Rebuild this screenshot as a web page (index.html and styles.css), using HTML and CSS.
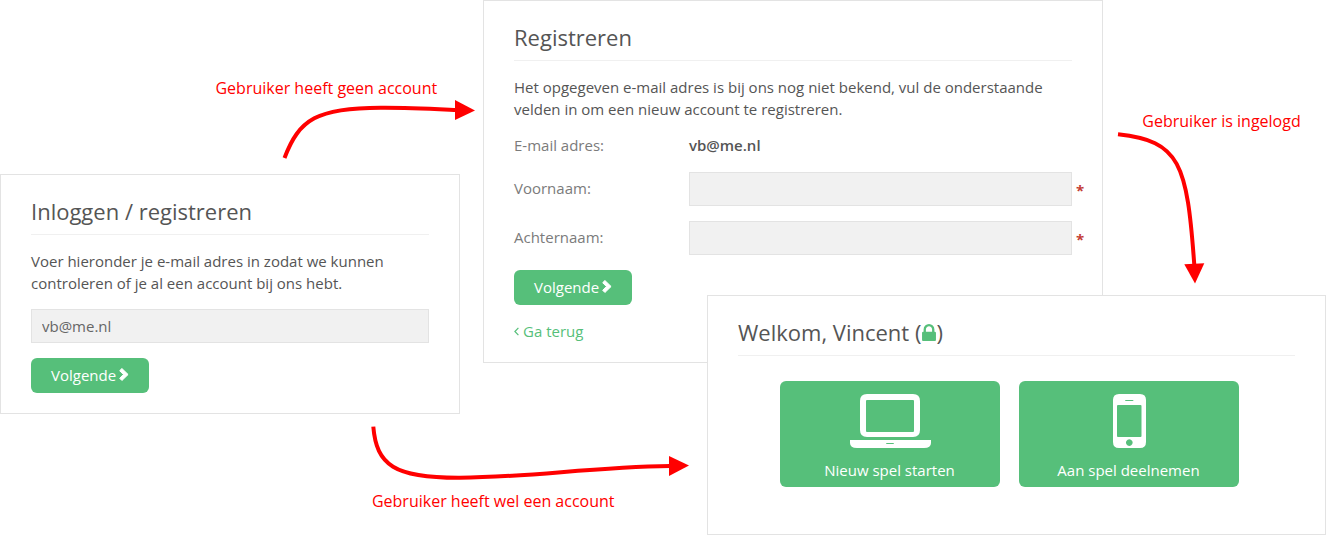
FILE: index.html
```html
<!DOCTYPE html>
<html lang="nl">
<head>
<meta charset="utf-8">
<meta name="viewport" content="width=device-width, initial-scale=1">
<title>Inloggen / registreren</title>
<link rel="stylesheet" href="styles.css">
</head>
<body>
<main class="flow">
  <form class="card card-login">
    <h2 class="card-title">Inloggen / registreren</h2>
    <p class="intro" id="login-intro">Voer hieronder je e-mail adres in zodat we kunnen controleren of je al een account bij ons hebt.</p>
    <input class="input" type="email" value="vb@me.nl" aria-labelledby="login-intro">
    <button class="button" type="button">Volgende
      <svg class="chevron" viewBox="0 0 10 13" aria-hidden="true"><path d="M2.9 .5 9.1 6.5 2.9 12.5 .7 10.3 4.4 6.5 .7 2.7Z"/></svg>
    </button>
  </form>

  <form class="card card-register">
    <h2 class="card-title">Registreren</h2>
    <p class="intro">Het opgegeven e-mail adres is bij ons nog niet bekend, vul de onderstaande velden in om een nieuw account te registreren.</p>
    <div class="row">
      <span class="label">E-mail adres:</span>
      <strong class="value">vb@me.nl</strong>
    </div>
    <div class="row">
      <label class="label" for="voornaam">Voornaam:</label>
      <div class="field"><input class="input" id="voornaam" type="text" required><span class="required">*</span></div>
    </div>
    <div class="row">
      <label class="label" for="achternaam">Achternaam:</label>
      <div class="field"><input class="input" id="achternaam" type="text" required><span class="required">*</span></div>
    </div>
    <button class="button" type="button">Volgende
      <svg class="chevron" viewBox="0 0 10 13" aria-hidden="true"><path d="M2.9 .5 9.1 6.5 2.9 12.5 .7 10.3 4.4 6.5 .7 2.7Z"/></svg>
    </button>
    <a class="back" href="#">
      <svg class="angle" viewBox="0 0 5 9" aria-hidden="true"><path d="M4.4 .9 .9 4.5 4.4 8.1"/></svg>
      Ga terug</a>
  </form>

  <section class="card card-welcome">
    <h2 class="card-title">Welkom, Vincent (<svg class="lock" viewBox="0 128 1152 1408" aria-hidden="true"><path d="M320 768h512v-192q0-106-75-181t-181-75-181 75-75 181v192zm832 96v576q0 40-28 68t-68 28h-960q-40 0-68-28t-28-68v-576q0-40 28-68t68-28h32v-192q0-184 132-316t316-132 316 132 132 316v192h32q40 0 68 28t28 68z"/></svg>)</h2>
    <div class="tiles">
      <button class="tile" type="button">
        <svg class="tile-icon" viewBox="-1 0 82 54" aria-hidden="true"><path fill-rule="evenodd" d="M17 0H63Q70 0 70 7V36Q70 43 63 43H17Q10 43 10 36V7Q10 0 17 0ZM17 6Q16 6 16 7V37Q16 38 17 38H63Q64 38 64 37V7Q64 6 63 6ZM0 46H81V49Q81 54 74 54H7Q0 54 0 49ZM37 49Q36 49 36 49.500T37 50H43Q44 50 44 49.500T43 49Z"/></svg>
        Nieuw spel starten
      </button>
      <button class="tile" type="button">
        <svg class="tile-icon" viewBox="-1 0 34 54" aria-hidden="true"><path fill-rule="evenodd" d="M6 0H27Q33 0 33 6V48Q33 54 27 54H6Q0 54 0 48V6Q0 0 6 0ZM5 11Q4 11 4 12V42Q4 43 5 43H27.500Q28.500 43 28.500 42V12Q28.500 11 27.500 11ZM13 6Q12 6 12 6.500T13 7H19.500Q20.500 7 20.500 6.500T19.500 6ZM16.300 45.300a3.300 3.300 0 1 0 .01 0Z"/></svg>
        Aan spel deelnemen
      </button>
    </div>
  </section>

  <svg class="arrows" viewBox="0 0 1326 535" preserveAspectRatio="none" aria-hidden="true">
    <path class="line" d="M284.500 158C299 120 316 107 385 107.700C410 107.700 435 109 457 110"/>
    <path class="head" d="M455 100 475 110.500 455 120Z"/>
    <path class="line" d="M373.300 426.700C376.500 465 394 478 460 477.700C530 477.500 590 467 670 466"/>
    <path class="head" d="M669 456 689 465.500 669 476Z"/>
    <path class="line" d="M1118 134.300C1180 141 1187 163 1194.300 265"/>
    <path class="head" d="M1184.300 264.300 1204.300 263.300 1195 283.500Z"/>
  </svg>
  <p class="note note-new">Gebruiker heeft geen account</p>
  <p class="note note-known">Gebruiker heeft wel een account</p>
  <p class="note note-done">Gebruiker is ingelogd</p>
</main>
</body>
</html>
```

FILE: styles.css
```css
* {
  box-sizing: border-box;
}

body {
  margin: 0;
  background: #fff;
  color: #555;
  font: 15px/22px "Open Sans", "Noto Sans", sans-serif;
}

/* The three cards overlap, so they share one row of a five-column grid */
.flow {
  position: relative;
  display: grid;
  grid-template-columns:
    minmax(0, 460fr) minmax(0, 23fr) minmax(0, 224fr)
    minmax(0, 396fr) minmax(0, 223fr);
  align-items: start;
}

.card {
  grid-row: 1;
  padding: 20px 30px;
  border: 1px solid #e3e3e3;
  background: #fff;
}

.card-login {
  grid-column: 1;
  margin-top: 174px;
}

.card-register {
  grid-column: 3 / 5;
}

.card-welcome {
  grid-column: 4 / 6;
  margin-top: 295px;
}

.card-title {
  margin: 0 0 15px;
  padding-bottom: 7px;
  border-bottom: 1px solid #f0f0f0;
  font-size: 22px;
  font-weight: 400;
  line-height: 32px;
}

.intro {
  margin: 0 0 15px;
}

.input {
  display: block;
  width: 100%;
  height: 34px;
  padding: 0 10px;
  border: 1px solid #e3e3e3;
  border-radius: 0;
  background: #f1f1f1;
  color: #666;
  font: inherit;
}

.card-login .input {
  margin-bottom: 15px;
}

.button {
  display: flex;
  align-items: center;
  gap: 3px;
  height: 35px;
  padding: 0 20px 2px;
  border: 0;
  border-radius: 6px;
  background: #56bf7a;
  color: #fff;
  font: inherit;
}

.chevron {
  width: 10px;
  height: 13px;
  fill: #fff;
  stroke: #fff;
  stroke-width: 1;
  stroke-linejoin: round;
}

.row {
  display: grid;
  grid-template-columns: 175px minmax(0, 1fr);
  align-items: center;
  margin-bottom: 15px;
}

.label,
.value {
  padding-bottom: 2px;
  line-height: 20px;
}

.label {
  color: #7b7b7b;
}

.value {
  font-weight: 600;
}

.field {
  position: relative;
}

.required {
  position: absolute;
  top: 7px;
  left: 100%;
  padding-left: 4px;
  color: #c43c35;
  font-weight: 700;
}

.back {
  display: flex;
  align-items: center;
  gap: 4px;
  margin-top: 15px;
  color: #56bf7a;
  text-decoration: none;
}

.angle {
  width: 5px;
  height: 9px;
  fill: none;
  stroke: #56bf7a;
  stroke-width: 1.2;
}

.lock {
  width: 14px;
  height: 17px;
  margin-left: 1px;
  fill: #56bf7a;
}

.tiles {
  display: flex;
  justify-content: center;
  gap: 4px;
  margin: 25px 0 27px;
}

.tile {
  display: flex;
  flex: 0 1 220px;
  flex-direction: column;
  align-items: center;
  gap: 11px;
  margin-right: 15px;
  padding: 13px 10px 6px;
  border: 0;
  border-radius: 6px;
  background: #56bf7a;
  color: #fff;
  font: inherit;
}

.tile-icon {
  height: 54px;
  fill: #fff;
}

.arrows {
  position: absolute;
  top: 0;
  left: 0;
  width: 100%;
  height: 100%;
  pointer-events: none;
}

.line {
  fill: none;
  stroke: #f00;
  stroke-width: 4;
}

.head {
  fill: #f00;
}

.note {
  position: absolute;
  margin: 0;
  color: #f00;
  font-size: 16px;
}

.note-new {
  top: 77px;
  left: 16.25%;
}

.note-known {
  top: 490px;
  left: 28.05%;
}

.note-done {
  top: 110px;
  left: 86.15%;
}
```
